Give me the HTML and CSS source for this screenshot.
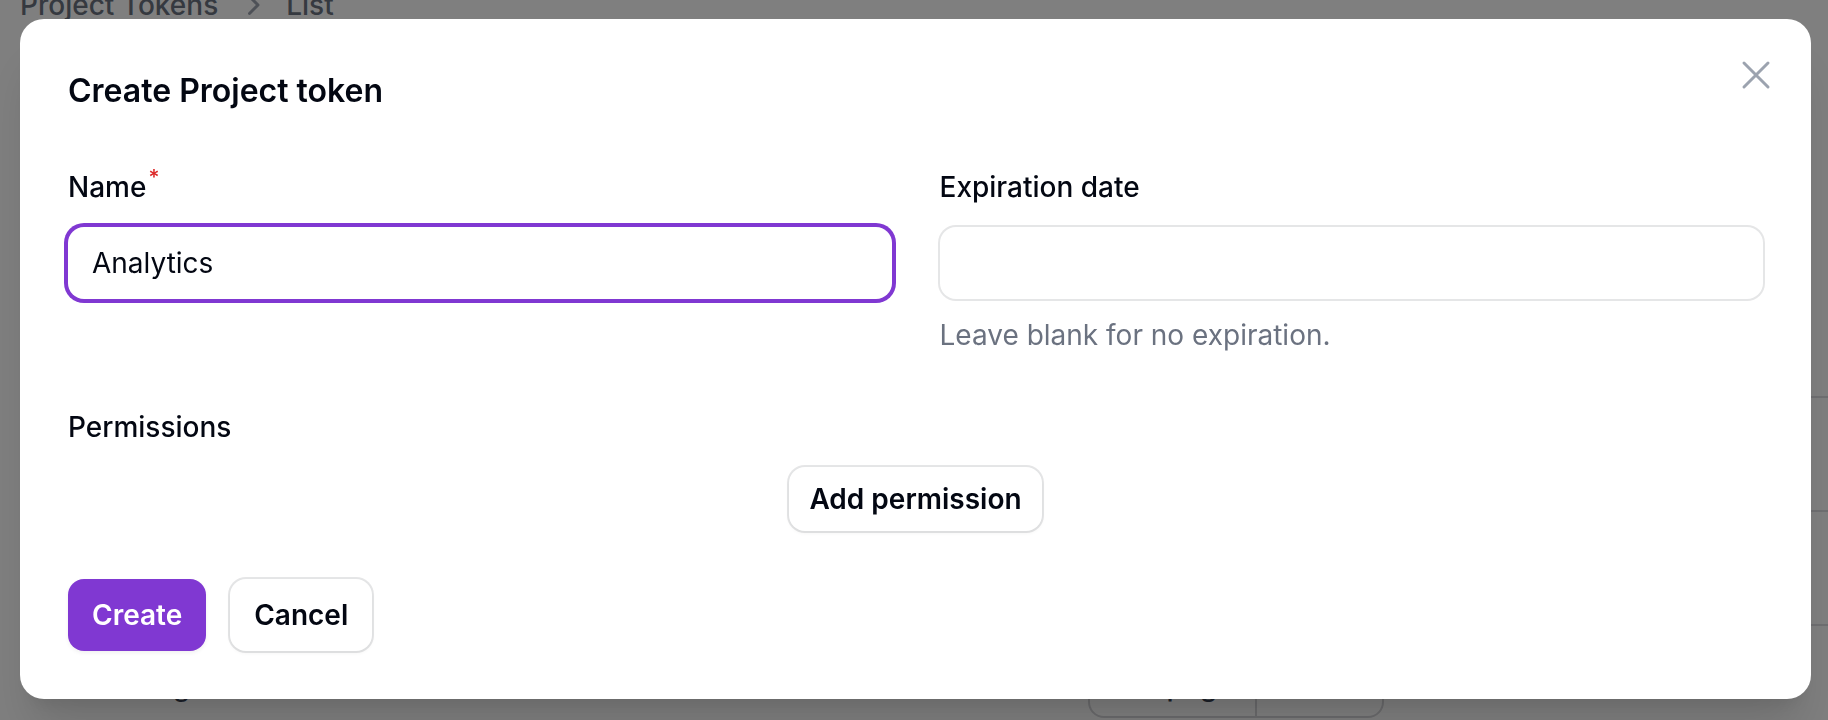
FILE: index.html
```html
<!DOCTYPE html>
<html lang="en">
<head>
<meta charset="utf-8">
<title>Create Project token</title>
<link rel="stylesheet" href="styles.css">
</head>
<body>
<div class="page">
  <nav class="crumbs">
    <span>Project Tokens</span>
    <svg viewBox="0 0 20 20" fill="currentColor"><path fill-rule="evenodd" d="M8.22 5.22a.75.75 0 0 1 1.06 0l4.25 4.25a.75.75 0 0 1 0 1.06l-4.25 4.25a.75.75 0 0 1-1.06-1.06L11.94 10 8.22 6.28a.75.75 0 0 1 0-1.06Z" clip-rule="evenodd"/></svg>
    <span>List</span>
  </nav>
  <div class="table">
    <div class="trow"></div>
    <div class="trow"></div>
    <div class="trow"></div>
    <div class="tfoot">
      <span class="overview">Showing 1 to 2 of 2 results</span>
      <div class="perpage">
        <span class="pp-label">Per page</span>
        <span class="pp-select">10</span>
      </div>
    </div>
  </div>
</div>

<div class="overlay">
  <div class="modal">
    <svg class="close" viewBox="0 0 24 24" fill="none" stroke="currentColor" stroke-width="1.5" stroke-linecap="round" stroke-linejoin="round"><path d="M6 18 18 6M6 6l12 12"/></svg>
    <h2 class="title">Create Project token</h2>
    <div class="fields">
      <div class="field">
        <label class="label">Name<sup class="req">*</sup></label>
        <input class="input focus" type="text" value="Analytics">
      </div>
      <div class="field">
        <label class="label">Expiration date</label>
        <input class="input" type="text" value="">
        <p class="hint">Leave blank for no expiration.</p>
      </div>
    </div>
    <div class="perm">
      <span class="label">Permissions</span>
      <button class="btn btn-sm btn-outline add" type="button">Add permission</button>
    </div>
    <div class="actions">
      <button class="btn btn-primary" type="button">Create</button>
      <button class="btn btn-outline" type="button">Cancel</button>
    </div>
  </div>
</div>
</body>
</html>
```

FILE: styles.css
```css
* { box-sizing: border-box; }
html, body { margin: 0; }
body {
  width: 1828px;
  height: 720px;
  overflow: hidden;
  position: relative;
  background: #ffffff;
  color: #030712;
  font-family: Inter, "Noto Sans", sans-serif;
}

/* background page */
.page { padding-left: 20px; }
.crumbs {
  display: flex;
  align-items: center;
  gap: 14px;
  margin-top: -15px;
  height: 40px;
  font-size: 28px;
  line-height: 40px;
  font-weight: 500;
  color: #6b7280;
}
.crumbs svg { width: 40px; height: 40px; color: #9ca3af; }
.table { margin-top: 259px; }
.trow { height: 114px; border-bottom: 2px solid #dedee2; }
.tfoot {
  display: grid;
  grid-template-columns: 1012px auto;
  align-items: start;
  padding: 20px 0 0 56px;
}
.overview {
  padding-top: 20px;
  font-size: 28px;
  line-height: 40px;
  color: #374151;
}
.perpage {
  display: flex;
  width: 296px;
  height: 72px;
  border: 2px solid #d6d6da;
  border-radius: 16px;
  font-size: 28px;
  line-height: 40px;
  font-weight: 500;
  color: #374151;
}
.pp-label {
  width: 167px;
  padding: 18px 0 0 24px;
  border-right: 2px solid #d6d6da;
}
.pp-select { padding: 18px 0 0 24px; color: #030712; }

/* overlay + modal */
.overlay {
  position: fixed;
  inset: 0;
  background: rgba(0, 0, 0, 0.5);
  padding: 19px 0 0 20px;
}
.modal {
  position: relative;
  width: 1791px;
  background: #ffffff;
  border-radius: 24px;
  padding: 48px;
  display: flex;
  flex-direction: column;
  gap: 48px;
  box-shadow: 0 40px 50px -10px rgba(0, 0, 0, 0.12), 0 16px 20px -12px rgba(0, 0, 0, 0.1);
}
.close {
  position: absolute;
  top: 32px;
  right: 31px;
  width: 48px;
  height: 48px;
  color: #9ca3af;
}
.title {
  margin: 0;
  font-size: 32px;
  line-height: 48px;
  font-weight: 600;
  color: #030712;
}
.fields {
  display: grid;
  grid-template-columns: 1fr 1fr;
  column-gap: 48px;
}
.field { display: flex; flex-direction: column; gap: 16px; }
.label {
  font-size: 28px;
  line-height: 48px;
  font-weight: 500;
  color: #030712;
}
.req {
  color: #dc2626;
  font-weight: 500;
  font-size: 21px;
  line-height: 0;
  margin-left: 2px;
  vertical-align: 12px;
}
.input {
  display: block;
  width: 100%;
  height: 72px;
  margin: 0;
  border: 0;
  outline: none;
  border-radius: 16px;
  background: #ffffff;
  padding: 12px 24px;
  font-family: inherit;
  font-size: 28px;
  line-height: 48px;
  color: #030712;
  box-shadow: 0 0 0 2px rgba(3, 7, 18, 0.1);
}
.input.focus { box-shadow: 0 0 0 4px #8038d2; }
.hint {
  margin: 0;
  font-size: 28px;
  line-height: 40px;
  color: #6b7280;
}
.perm { display: flex; flex-direction: column; gap: 16px; }
.btn {
  font-family: inherit;
  font-size: 28px;
  line-height: 40px;
  font-weight: 600;
  border: 0;
  border-radius: 16px;
  padding: 16px 24px;
  margin: 0;
  cursor: pointer;
}
.btn-sm { padding: 12px 20px; }
.btn-primary {
  background: #8038d2;
  color: #ffffff;
  box-shadow: 0 2px 4px rgba(0, 0, 0, 0.06);
}
.btn-outline {
  background: #ffffff;
  color: #030712;
  box-shadow: 0 0 0 2px rgba(3, 7, 18, 0.1), 0 2px 4px rgba(0, 0, 0, 0.05);
}
.add { align-self: center; }
.actions { display: flex; gap: 24px; }
```
